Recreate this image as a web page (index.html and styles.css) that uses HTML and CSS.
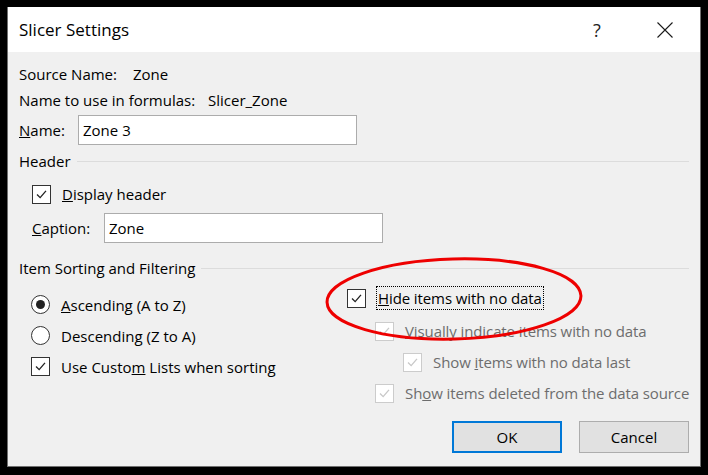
FILE: index.html
```html
<!DOCTYPE html>
<html>
<head>
<meta charset="utf-8">
<link rel="stylesheet" href="styles.css">
</head>
<body>
<div class="dialog">
  <div class="titlebar">
    <div class="title">Slicer Settings</div>
    <div class="tb-help">?</div>
    <div class="tb-close">
      <svg width="16" height="16" viewBox="0 0 16 16"><path d="M0.5 0.5 L15.5 15.5 M15.5 0.5 L0.5 15.5" stroke="#1a1a1a" stroke-width="1.1" fill="none"/></svg>
    </div>
  </div>
  <div class="content">
    <div class="row info"><span class="lbl-source">Source Name:</span><span>Zone</span></div>
    <div class="row info"><span class="lbl-formula">Name to use in formulas:</span><span>Slicer_Zone</span></div>
    <div class="row field name-row"><span class="lbl-name"><u>N</u>ame:</span><div class="input name-input">Zone 3</div></div>
    <div class="group"><span>Header</span><div class="rule"></div></div>
    <div class="row check-row display-row"><span class="cb"><svg viewBox="0 0 19 19"><path d="M4.5 9.5 L8 13 L14.5 5.5" stroke="#222" stroke-width="1.5" fill="none"/></svg></span><span><u>D</u>isplay header</span></div>
    <div class="row field caption-row"><span class="lbl-caption"><u>C</u>aption:</span><div class="input caption-input">Zone</div></div>
    <div class="group sorting"><span>Item Sorting and Filtering</span><div class="rule"></div></div>
    <div class="columns">
      <div class="col-left">
        <div class="opt"><span class="radio on"><span class="dot"></span></span><span><u>A</u>scending (A to Z)</span></div>
        <div class="opt"><span class="radio"></span><span>Descendin<u>g</u> (Z to A)</span></div>
        <div class="opt"><span class="cb"><svg viewBox="0 0 19 19"><path d="M4.5 9.5 L8 13 L14.5 5.5" stroke="#222" stroke-width="1.5" fill="none"/></svg></span><span>Use Custo<u>m</u> Lists when sorting</span></div>
      </div>
      <div class="col-right">
        <div class="ropt hide-row"><span class="cb"><svg viewBox="0 0 19 19"><path d="M4.5 9.5 L8 13 L14.5 5.5" stroke="#222" stroke-width="1.5" fill="none"/></svg></span><span class="focus"><u>H</u>ide items with no data</span></div>
        <div class="ropt dis r2"><span class="cb dis-cb"><svg viewBox="0 0 19 19"><path d="M4.5 9.5 L8 13 L14.5 5.5" stroke="#c8c8c8" stroke-width="1.5" fill="none"/></svg></span><span><u>V</u>isually indicate items with no data</span></div>
        <div class="ropt dis r3 indent"><span class="cb dis-cb"><svg viewBox="0 0 19 19"><path d="M4.5 9.5 L8 13 L14.5 5.5" stroke="#c8c8c8" stroke-width="1.5" fill="none"/></svg></span><span>Show <u>i</u>tems with no data last</span></div>
        <div class="ropt dis r3"><span class="cb dis-cb"><svg viewBox="0 0 19 19"><path d="M4.5 9.5 L8 13 L14.5 5.5" stroke="#c8c8c8" stroke-width="1.5" fill="none"/></svg></span><span>Sh<u>o</u>w items deleted from the data source</span></div>
        <svg class="ellipse" width="262" height="86" viewBox="0 0 262 86"><ellipse cx="131" cy="43" rx="127" ry="40" fill="none" stroke="#ee0000" stroke-width="3" transform="rotate(-1.5 131 43)"/></svg>
      </div>
    </div>
    <div class="buttons">
      <div class="btn ok">OK</div>
      <div class="btn">Cancel</div>
    </div>
  </div>
</div>
</body>
</html>
```
FILE: styles.css
```css
html, body {
  margin: 0;
  padding: 0;
  background: #000;
}
body {
  padding: 7px 0 0 7px;
  font-family: "Open Sans", "Noto Sans", sans-serif;
  font-size: 15px;
  color: #000;
}
.dialog {
  width: 692px;
  height: 459px;
  border: 1px solid #707070;
  border-top: none;
  background: #f0f0f0;
  display: flex;
  flex-direction: column;
}
.titlebar {
  height: 45px;
  background: #fff;
  display: flex;
  align-items: center;
  padding-left: 11px;
}
.title {
  font-size: 17px;
  flex: 1;
}
.tb-help {
  font-size: 18px;
  color: #222;
  width: 20px;
  margin-right: 44px;
}
.tb-close {
  width: 16px;
  height: 16px;
  margin-right: 27px;
}
.tb-close svg { display: block; }
.content {
  padding: 9px 11px 0 11px;
  position: relative;
  flex: 1;
}
.row {
  display: flex;
  align-items: center;
  height: 26px;
}
.lbl-source { width: 114px; }
.lbl-formula { width: 189px; }
.field { height: 30px; }
.name-row { margin-top: 2px; }
.lbl-name { width: 59px; }
.input {
  background: #fff;
  border: 1px solid #acacac;
  box-sizing: border-box;
  height: 30px;
  display: flex;
  align-items: center;
  padding-left: 4px;
}
.name-input { width: 279px; }
.group {
  display: flex;
  align-items: center;
  height: 20px;
  margin-top: 6px;
}
.rule {
  flex: 1;
  height: 1px;
  background: #dcdcdc;
  margin-left: 6px;
}
.check-row { padding-left: 13px; }
.display-row { margin-top: 10px; }
.cb {
  width: 19px;
  height: 19px;
  box-sizing: border-box;
  border: 1px solid #333;
  background: #fff;
  margin-right: 11px;
  flex: none;
}
.cb svg { display: block; width: 17px; height: 17px; }
.dis-cb { border-color: #cccccc; }
.caption-row { margin-top: 6px; padding-left: 13px; }
.lbl-caption { width: 72px; }
.caption-input { width: 279px; }
.sorting { margin-top: 15px; }
.columns {
  display: flex;
}
.col-left {
  flex: none;
  width: 316px;
  padding-top: 11px;
  padding-left: 12px;
}
.opt {
  display: flex;
  align-items: center;
  height: 31px;
}
.radio {
  width: 19px;
  height: 19px;
  box-sizing: border-box;
  border: 1px solid #333;
  border-radius: 50%;
  background: #fff;
  margin-right: 11px;
  display: flex;
  align-items: center;
  justify-content: center;
  flex: none;
}
.dot {
  width: 9px;
  height: 9px;
  border-radius: 50%;
  background: #222;
}
.col-right {
  position: relative;
  padding-top: 7px;
  flex: 1;
  min-width: 0;
}
.ropt {
  display: flex;
  align-items: center;
  height: 26px;
  white-space: nowrap;
  letter-spacing: -0.1px;
}
.ropt.dis { padding-left: 28px; color: #6d6d6d; }
.ropt.indent { padding-left: 56px; }
.r2 { margin-top: 7px; }
.r3 { margin-top: 5px; }
.focus {
  outline: 1px dotted #000;
  outline-offset: 0;
  padding: 1px 1px;
  line-height: 20px;
}
.ellipse {
  position: absolute;
  left: -24px;
  top: -22px;
  pointer-events: none;
}
.buttons {
  display: flex;
  justify-content: flex-end;
  gap: 17px;
  margin-top: 15px;
  padding-right: 0;
}
.btn {
  width: 110px;
  height: 32px;
  box-sizing: border-box;
  border: 1px solid #adadad;
  background: #e1e1e1;
  display: flex;
  align-items: center;
  justify-content: center;
}
.btn.ok { border: 2px solid #0078d7; }
```
